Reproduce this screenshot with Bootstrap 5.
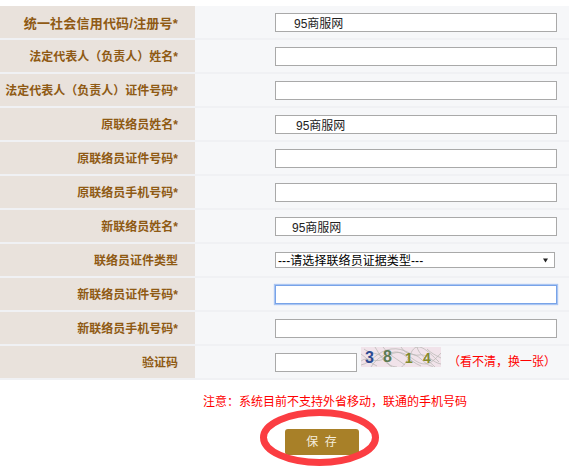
<!DOCTYPE html>
<html lang="zh">
<head>
<meta charset="utf-8">
<title>联络员变更</title>
<link href="https://cdn.jsdelivr.net/npm/bootstrap@5.3.0/dist/css/bootstrap.min.css" rel="stylesheet">
<style>
html,body{background:#fff;overflow:hidden}
body{font-family:"Liberation Sans","Noto Sans CJK TC",sans-serif;font-size:12px;padding-top:6px;width:569px;height:471px}
.frow{height:34px;border-bottom:2px solid #f0f1f4;background:#f6f7f9}
.flabel{width:195px;height:100%;background:#e9e2dc;color:#8f5a14;font-size:12px;font-weight:700;text-align:right;padding-right:17px;line-height:35px;flex:none;white-space:nowrap}
.flabel-lg{font-size:13px;letter-spacing:.2px}
.fbody{padding-left:80px;flex:1;min-width:0;height:100%}
.finput{width:282px;height:19px;border:1px solid #a9a9a9;background:#fff;padding:0;font-size:12px;color:#222;outline:0;display:block;font-family:"Liberation Sans","Noto Sans CJK SC",sans-serif}
.pad-a{padding-left:18px}
.pad-b{padding-left:20px}
.pad-c{padding-left:16px}
.finput-focus{border-color:#78a3e8;box-shadow:0 0 1px 1px #a9c5f2}
.fselect{width:280px;height:16px;border:1px solid #a9a9a9;background:#fff;color:#000;font-size:12px;line-height:14px;padding:0 5px 0 2px;overflow:hidden}
.fselect span{padding-top:2px;letter-spacing:.08px}
.fselect svg{flex:none}
.fshort{width:82px}
.capt{width:80px;height:20px;margin-left:4px;margin-top:-10px;flex:none}
.refresh{color:#f00;margin-left:7px;font-size:12px;white-space:nowrap}
.note{color:#f00;font-size:12px;text-align:center;padding-left:101px;margin-top:14px;line-height:16px}
.savewrap{width:119px;height:57px;margin-left:260px;margin-top:-1px}
.savebtn{width:74px;height:26px;background:#a88028;color:#f4eddc;font-size:12px;border:0;border-radius:3px;padding:0;margin-top:9px;margin-left:4px}
.circle{position:absolute;left:0;top:0;width:119px;height:57px;pointer-events:none}
</style>
</head>
<body>
<form>
  <div class="frow d-flex"><div class="flabel flabel-lg">统一社会信用代码/注册号*</div><div class="fbody d-flex align-items-center"><input class="finput pad-a" value="95商服网"></div></div>
  <div class="frow d-flex"><div class="flabel">法定代表人（负责人）姓名*</div><div class="fbody d-flex align-items-center"><input class="finput"></div></div>
  <div class="frow d-flex"><div class="flabel">法定代表人（负责人）证件号码*</div><div class="fbody d-flex align-items-center"><input class="finput"></div></div>
  <div class="frow d-flex"><div class="flabel">原联络员姓名*</div><div class="fbody d-flex align-items-center"><input class="finput pad-b" value="95商服网"></div></div>
  <div class="frow d-flex"><div class="flabel">原联络员证件号码*</div><div class="fbody d-flex align-items-center"><input class="finput"></div></div>
  <div class="frow d-flex"><div class="flabel">原联络员手机号码*</div><div class="fbody d-flex align-items-center"><input class="finput"></div></div>
  <div class="frow d-flex"><div class="flabel">新联络员姓名*</div><div class="fbody d-flex align-items-center"><input class="finput pad-c" value="95商服网"></div></div>
  <div class="frow d-flex"><div class="flabel">联络员证件类型</div><div class="fbody d-flex align-items-center"><div class="fselect d-flex align-items-center justify-content-between"><span>---请选择联络员证据类型---</span><svg width="7" height="5" viewBox="0 0 7 5"><path d="M1 0.5h5L3.5 4.5z" fill="#222"/></svg></div></div></div>
  <div class="frow d-flex"><div class="flabel">新联络员证件号码*</div><div class="fbody d-flex align-items-center"><input class="finput finput-focus"></div></div>
  <div class="frow d-flex"><div class="flabel">新联络员手机号码*</div><div class="fbody d-flex align-items-center"><input class="finput"></div></div>
  <div class="frow d-flex"><div class="flabel">验证码</div><div class="fbody d-flex align-items-center"><input class="finput fshort">
    <svg class="capt" viewBox="0 0 80 20">
      <rect width="80" height="20" fill="#f1e3ea"/>
      <g fill="none" stroke="#b5b5b0" stroke-width=".7">
        <path d="M0 14C8 8 14 18 24 11S40 3 52 12 70 17 80 6"/>
        <path d="M3 2C12 9 18 3 27 16S44 19 50 6 66 3 78 15"/>
        <path d="M10 20C16 10 26 6 34 5S48 14 60 19"/>
        <path d="M22 0C28 8 36 12 44 18M56 0C58 8 66 12 74 20"/>
        <path d="M0 7C6 11 10 17 16 19M66 2C70 6 74 8 80 11"/>
        <path d="M0 18C10 16 16 4 30 2S50 10 58 8 72 16 80 17"/>
        <path d="M14 0C18 6 24 20 36 20M40 0C46 10 52 4 60 12S70 18 72 20"/>
      </g>
      <g font-family="Liberation Sans,sans-serif" font-weight="700" font-size="16">
        <text x="4" y="15.5" fill="#2d4a92">3</text>
        <text x="22" y="14.5" fill="#5d7b53">8</text>
        <text x="44" y="16" fill="#7f8a2c" font-size="14">1</text>
        <text x="62" y="16" fill="#868a2f" font-size="14">4</text>
      </g>
    </svg>
    <span class="refresh">（看不清，换一张）</span></div></div>
  <div class="note">注意：系统目前不支持外省移动，联通的手机号码</div>
  <div class="savewrap position-relative d-flex align-items-center justify-content-center">
    <button type="button" class="savebtn">保&nbsp;&nbsp;存</button>
    <svg class="circle" viewBox="0 0 119 57"><ellipse cx="59.5" cy="28.5" rx="56" ry="25" fill="none" stroke="#fb3d42" stroke-width="7"/></svg>
  </div>
</form>
<script src="https://cdn.jsdelivr.net/npm/bootstrap@5.3.0/dist/js/bootstrap.bundle.min.js"></script>
</body>
</html>
